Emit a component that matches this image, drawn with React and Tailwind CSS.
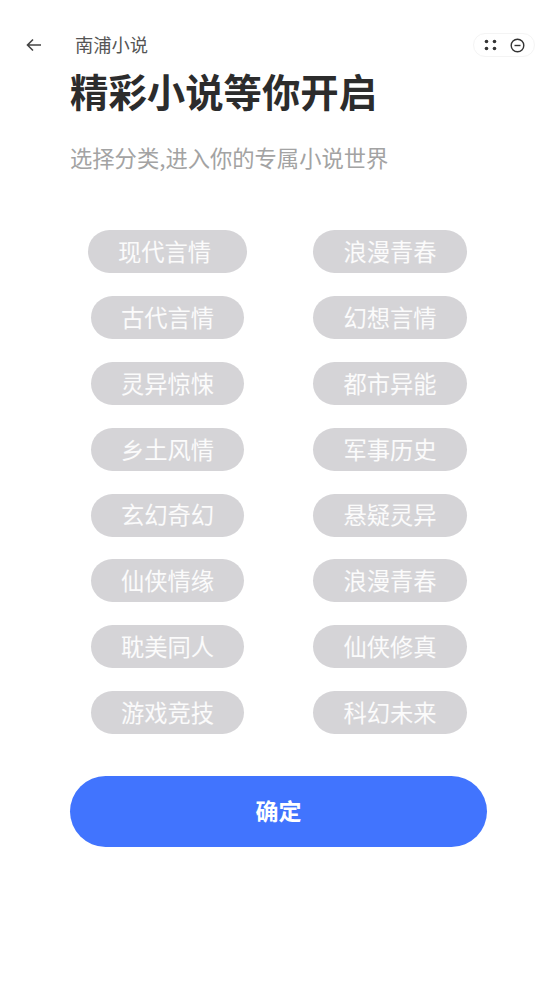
import React from 'react';

const leftTags = ['现代言情', '古代言情', '灵异惊悚', '乡土风情', '玄幻奇幻', '仙侠情缘', '耽美同人', '游戏竞技'];
const rightTags = ['浪漫青春', '幻想言情', '都市异能', '军事历史', '悬疑灵异', '浪漫青春', '仙侠修真', '科幻未来'];

function Tag({ label, className }) {
  return (
    <div className={`h-[43px] rounded-full bg-[#d5d4d7] flex items-center justify-center text-white/90 text-[23.3px] leading-none ${className}`}>
      {label}
    </div>
  );
}

export default function App() {
  return (
    <div className="w-[557px] h-[994px] bg-white overflow-hidden font-['Noto_Sans_CJK_SC','Noto_Sans',sans-serif]">
      <div className="h-[70px] pt-[33px] pl-[26px] pr-[22px] flex items-start">
        <svg width="16" height="14" viewBox="0 0 16 14" fill="none" stroke="#444" strokeWidth="1.6" className="mt-[5px]">
          <path d="M15 7H1.500M7 1.500 1.500 7 7 12.500" />
        </svg>
        <div className="ml-[33px] -mt-px text-[18.3px] leading-6 text-[#555]">南浦小说</div>
        <div className="ml-auto w-[62px] h-6 rounded-full border border-[#f4f4f4] flex items-center justify-center gap-[13px]">
          <svg width="13" height="12" viewBox="0 0 13 12" fill="#333">
            <circle cx="2.500" cy="2.500" r="1.800" />
            <circle cx="10.500" cy="2.500" r="1.800" />
            <circle cx="2.500" cy="9.500" r="1.800" />
            <circle cx="10.500" cy="9.500" r="1.800" />
          </svg>
          <svg width="15" height="15" viewBox="0 0 15 15" fill="none" stroke="#333" strokeWidth="1.400">
            <circle cx="7.500" cy="7.500" r="6.300" />
            <path d="M4.500 7.500h6" />
          </svg>
        </div>
      </div>

      <div className="pl-[70px]">
        <h1 className="text-[38.4px] leading-10 font-bold text-[#2c2c2c]">精彩小说等你开启</h1>
        <p className="mt-[31px] text-[22.3px] leading-8 text-[#a3a3a3]">选择分类,进入你的专属小说世界</p>
      </div>

      <div className="mt-[57px] pl-[88px] flex">
        <div className="w-[159px] flex flex-col items-center gap-[22.900px]">
          {leftTags.map((t, i) => <Tag key={i} label={t} className={i === 0 ? 'w-[159px] pr-1.5' : 'w-[153px]'} />)}
        </div>
        <div className="ml-[66px] w-[154px] flex flex-col gap-[22.900px]">
          {rightTags.map((t, i) => <Tag key={i} label={t} className="w-[154px]" />)}
        </div>
      </div>

      <div className="mt-[42px] mx-[70px]">
        <button className="w-[417px] h-[71px] pb-0.5 rounded-full bg-[#4174fe] text-white text-[23px] font-bold">确定</button>
      </div>
    </div>
  );
}
